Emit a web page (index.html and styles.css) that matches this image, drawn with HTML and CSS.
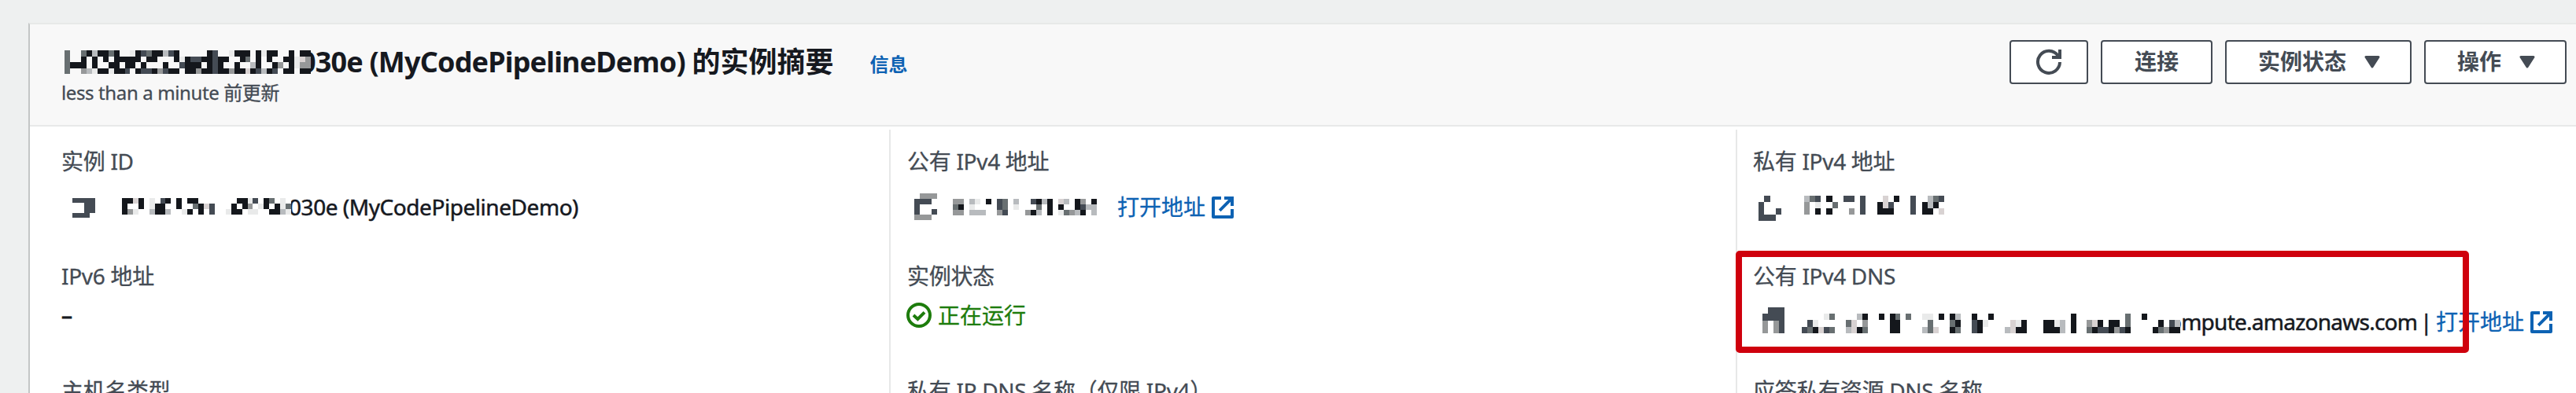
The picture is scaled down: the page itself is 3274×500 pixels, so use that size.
FILE: index.html
```html
<!DOCTYPE html>
<html lang="zh-CN">
<head>
<meta charset="utf-8">
<title>实例摘要</title>
<link rel="stylesheet" href="styles.css">
</head>
<body>
<svg class="defs" width="0" height="0">
  <symbol id="external" viewBox="0 0 28 28">
    <path d="M12 2H2V26H26V16" fill="none" stroke="currentColor" stroke-width="4" stroke-linejoin="round"/>
    <path d="M16 0H28V12H24V6.8L11.5 19.2L8.8 16.4L21.2 4H16Z" fill="currentColor"/>
  </symbol>
</svg>
<section class="panel">
  <header class="panel-head">
    <div class="heading">
      <div class="title-row">
        <h1 class="title"><span class="mosaic title-mosaic" data-w="313" data-h="30" data-rows="m..mklkkmk..ekdmkkldk.....kd..ekkk.kekk..k.kk|m..k.k.k.kkkkk.kk...kekddkkdkk..km.k.k..kkepg|mkkk.k..kk.kk.k...k..dkkk.kdk..k..lk..kg.kegg|m..glekkekkd.kddkgdkk.kkgkkdkkgkkpkdlkd.kk.kk"></span><span class="title-text">030e (MyCodePipelineDemo) <span class="cjk">的实例摘要</span></span></h1>
        <a class="info">信息</a>
      </div>
      <div class="updated">less than a minute 前更新</div>
    </div>
    <div class="actions">
      <button class="btn btn-icon"><svg width="34" height="34" viewBox="0 0 34 34"><path d="M31 17A14 14 0 1 1 28.6 9" fill="none" stroke="currentColor" stroke-width="4"/><path d="M29 1H33V13H21V9H29Z" fill="currentColor"/></svg></button>
      <button class="btn btn-connect">连接</button>
      <button class="btn btn-menu">实例状态<svg class="caret" width="20" height="16" viewBox="0 0 20 16"><path d="M2 1.5H18L10 14Z" fill="currentColor" stroke="currentColor" stroke-width="3" stroke-linejoin="round"/></svg></button>
      <button class="btn btn-menu">操作<svg class="caret" width="20" height="16" viewBox="0 0 20 16"><path d="M2 1.5H18L10 14Z" fill="currentColor" stroke="currentColor" stroke-width="3" stroke-linejoin="round"/></svg></button>
    </div>
  </header>
  <div class="columns">
    <div class="column">
      <div class="field">
        <div class="label">实例 ID</div>
        <div class="value value-id"><span class="mosaic" data-w="29" data-h="25" data-rows="dddd|..dd|..dd|ddd."></span><span class="mosaic id-mosaic" data-w="215" data-h="21" data-rows="kkpk.e.dk.k.kk.......kked.km.e.|k..k.ekk..k..mkpd...k.kg.ek.kem|kge..lkkl..ek.k.d..ekk.ee..kkle"></span><span class="id-text">030e (MyCodePipelineDemo)</span></div>
      </div>
      <div class="field">
        <div class="label">IPv6 地址</div>
        <div class="value value-dash">–</div>
      </div>
      <div class="field"><div class="label">主机名类型</div></div>
    </div>
    <div class="column">
      <div class="field">
        <div class="label">公有 IPv4 地址</div>
        <div class="value value-public"><span class="mosaic" data-w="29" data-h="34" data-rows=".ggg|ddd.|d...|d..d|ggg."></span><span class="mosaic public-mosaic" data-w="183" data-h="21" data-rows="gg.le.k.dm.l..dklk.pl.kg.k|mk.e....dm.e...m.k.k..kdll|gg.lll..gd...gkl.k.emglk.l"></span><a class="link">打开地址<svg class="ext" width="28" height="28"><use href="#external"/></svg></a></div>
      </div>
      <div class="field">
        <div class="label">实例状态</div>
        <div class="value value-status"><svg width="32" height="32" viewBox="0 0 32 32"><circle cx="16" cy="16" r="14" fill="none" stroke="currentColor" stroke-width="4"/><path d="M9 16L14.4 21L23 12.4" fill="none" stroke="currentColor" stroke-width="4"/></svg><span>正在运行</span></div>
      </div>
      <div class="field"><div class="label">私有 IP DNS 名称（仅限 IPv4）</div></div>
    </div>
    <div class="column">
      <div class="field">
        <div class="label">私有 IPv4 地址</div>
        <div class="value value-private"><span class="mosaic" data-w="29" data-h="32" data-rows=".d..|d...|d..d|ddd."></span><span class="mosaic private-mosaic" data-w="178" data-h="24" data-rows="lmd.k..dd.d...p.k..d..lmd|g.e..m....d..kpd...d.klk.|g.k.k...g.d..kkk...d.kk.p"></span></div>
      </div>
      <div class="field">
        <div class="label">公有 IPv4 DNS</div>
        <div class="value value-dns"><span class="mosaic" data-w="28" data-h="33" data-rows=".ddd|dddd|g.gd|g.gd"></span><span class="mosaic dns-mosaic" data-w="481" data-h="25" data-rows="....em....lk..k.km.m..ee.k.kl..k..k..............k.........m..k......|.de.....mp.g....kk.....m...mk..dke....pek...kkel.k..gpk.kk.m.....k.dl|dmkpdm..lpkm....kk....lmp..km..dk....lpkk...kkkl.k..mkddkgdk....kmgkk"></span><span class="dns-text">ompute.amazonaws.com</span><span class="pipe">|</span><a class="link">打开地址<svg class="ext" width="28" height="28"><use href="#external"/></svg></a></div>
        <div class="highlight"></div>
      </div>
      <div class="field"><div class="label">应答私有资源 DNS 名称</div></div>
    </div>
  </div>
</section>
<script src="mosaic.js"></script>
</body>
</html>
```
FILE: styles.css
```css
* { box-sizing: border-box; }
body {
  margin: 0;
  width: 3274px;
  height: 500px;
  overflow: hidden;
  background: #eef0f0;
  color: #16191f;
  font-family: "Noto Sans", "Noto Sans CJK SC", sans-serif;
  font-size: 28px;
}
.defs { position: absolute; }
.panel {
  margin: 29px 0 0 36px;
  height: 471px;
  overflow: hidden;
  background: #fff;
  border-left: 2px solid #c3c6c6;
  border-top: 2px solid #e7e9e8;
}
.panel-head {
  display: flex;
  justify-content: space-between;
  height: 130px;
  padding: 20px 12px 0 40px;
  background: #f8f8f8;
  border-bottom: 2px solid #e8e9e9;
}
.title-row { display: flex; height: 54px; }
.title {
  display: flex;
  margin: 0;
  font-size: 36px;
  line-height: 54px;
  font-weight: 700;
  white-space: pre;
}
.mosaic {
  display: block;
  flex: none;
  position: relative;
  z-index: 1;
  background: #fff;
}
.mosaic svg { display: block; }
.title-mosaic { margin: 13px 0 0 4px; height: 30px; background: #f8f8f8; }
.title-text { margin: 1px 0 0 -14px; letter-spacing: -0.83px; }
.cjk { letter-spacing: 0; }
.info {
  margin-left: 46px;
  font-size: 24px;
  line-height: 61px;
  font-weight: 700;
  color: #0d62b3;
}
.updated {
  font-size: 24px;
  line-height: 32px;
  margin-top: -3px;
  letter-spacing: -0.38px;
  color: #444b54;
  -webkit-text-stroke: 0.3px currentColor;
}
.actions { display: flex; gap: 16px; }
.btn {
  display: flex;
  align-items: center;
  justify-content: center;
  height: 56px;
  padding: 0 0 2px;
  border: 2px solid #444b54;
  border-radius: 4px;
  background: #fff;
  color: #444b54;
  font: 700 28px/52px "Noto Sans", "Noto Sans CJK SC", sans-serif;
}
.btn-icon { width: 100px; padding: 0; }
.btn-connect { width: 142px; }
.btn-menu { padding: 0 38px 2px 40px; }
.caret { margin-left: 23px; margin-top: 2px; }
.columns {
  display: grid;
  grid-template-columns: 1092px 1076px 1068px;
  padding-top: 4px;
}
.column { padding: 20px 0 0 40px; height: 400px; }
.column + .column { padding-left: 21px; border-left: 2px solid #e7e8e8; }
.column:last-child { padding-left: 20px; }
.field { position: relative; height: 146px; }
.label {
  height: 40px;
  line-height: 40px;
  letter-spacing: -0.3px;
  color: #444b54;
  white-space: nowrap;
  -webkit-text-stroke: 0.3px currentColor;
}
.value { display: flex; line-height: 40px; white-space: nowrap; }
.value-id { padding: 27px 0 0 14px; }
.id-mosaic { margin-left: 34px; }
.id-text { margin: -9px 0 0 -3px; letter-spacing: -0.45px; -webkit-text-stroke: 0.5px currentColor; }
.value-dash { padding-top: 9px; -webkit-text-stroke: 0.8px currentColor; }
.value-public { padding: 21px 0 0 9px; }
.public-mosaic { margin: 7px 0 0 20px; }
.value-public .link { margin: -3px 0 0 26px; }
.value-private { padding: 24px 0 0 7px; }
.private-mosaic { margin-left: 29px; }
.value-status { padding: 14px 0 0; margin-left: -1px; color: #1d7c0c; }
.value-status span { margin: -4px 0 0 8px; -webkit-text-stroke: 0.3px currentColor; }
.value-dns { padding: 20px 0 0 12px; }
.dns-mosaic { margin: 8px 0 0 22px; }
.dns-text { margin: -2px 0 0 -15px; width: 321px; letter-spacing: -0.75px; -webkit-text-stroke: 0.5px currentColor; }
.pipe { margin: -2px 0 0 -1px; width: 15px; -webkit-text-stroke: 0.5px currentColor; }
.value-dns .link { margin: -2px 0 0 5px; }
.link { display: flex; color: #0d62b3; -webkit-text-stroke: 0.3px currentColor; }
.ext { margin: 7px 0 0 8px; }
.highlight {
  position: absolute;
  z-index: 2;
  left: -22px;
  top: -12px;
  width: 932px;
  height: 130px;
  border: 8px solid #cf000d;
  border-radius: 5px;
}
```
FILE: mosaic.js
```js
// Draws the pixelated redaction blocks; each letter selects a tone.
const tones = { k: "#14171c", d: "#444b54", m: "#686f71", g: "#969899", l: "#b8bbbe", p: "#d8d2d2", e: "#e9eaea" };

document.querySelectorAll(".mosaic").forEach((el) => {
  const rows = el.dataset.rows.split("|");
  const cols = Math.max(...rows.map((r) => r.length));
  let cells = "";
  rows.forEach((row, y) => {
    [...row].forEach((c, x) => {
      if (tones[c]) cells += `<rect x="${x}" y="${y}" width="1" height="1" fill="${tones[c]}"/>`;
    });
  });
  el.innerHTML = `<svg width="${el.dataset.w}" height="${el.dataset.h}" viewBox="0 0 ${cols} ${rows.length}" preserveAspectRatio="none" shape-rendering="crispEdges">${cells}</svg>`;
});
```
